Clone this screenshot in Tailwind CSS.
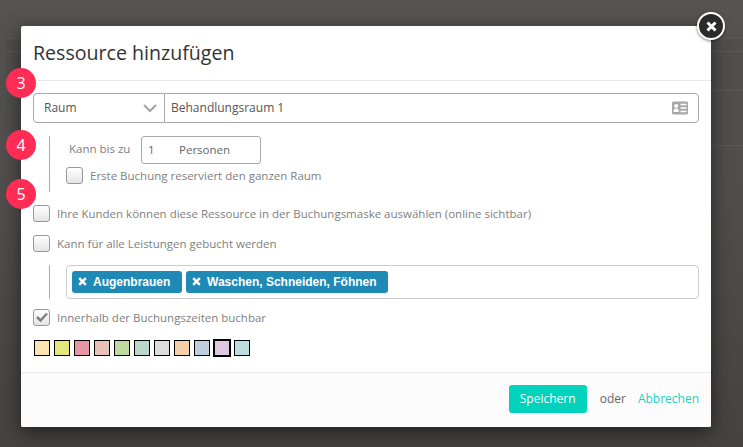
<!DOCTYPE html>
<html lang="de">
<head>
  <meta charset="UTF-8" />
  <title>Ressource hinzufügen</title>
  <script src="https://cdn.jsdelivr.net/npm/@tailwindcss/browser@4"></script>
</head>
<body class="w-[743px] h-[447px] overflow-hidden relative font-['Open_Sans',sans-serif] bg-gradient-to-b from-[#555452] via-[#4e4d4c] to-[#444342]">

  <!-- Seite hinter dem Overlay -->
  <div class="absolute left-[6px] right-0 top-[38px] h-[108px] bg-[#504f4e] border-y border-[#5a5958]">
    <div class="mt-[12px] h-[40px] border-y border-[#5a5958]"></div>
  </div>

  <!-- Modal -->
  <div class="absolute left-[21px] top-[26px] w-[690px] h-[401px] bg-white rounded-[2px] shadow-[0_5px_20px_rgba(0,0,0,0.55)] flex flex-col">
    <div class="h-[55px] shrink-0 border-b border-[#e8e8e8] pl-[12px] pt-[13px]">
      <h2 class="text-[19.6px] leading-[28px] text-[#333]">Ressource hinzufügen</h2>
    </div>

    <div class="flex-1 px-[12px] pt-[12px] text-[11.5px] text-[#808080]">
      <!-- Typ + Name -->
      <div class="flex h-[30px] border border-[#aaa] rounded-[4px] text-[#555] text-[12px]">
        <div class="w-[131px] shrink-0 border-r border-[#aaa] flex items-center justify-between pl-[10px] pr-[7px]">
          <span>Raum</span>
          <svg width="14" height="9" viewBox="0 0 14 9" fill="none" stroke="#a3a3a3" stroke-width="2"><path d="M1 1l6 6 6-6" /></svg>
        </div>
        <div class="flex-1 flex items-center justify-between pl-[6px] pr-[10px]">
          <span>Behandlungsraum 1</span>
          <svg width="16" height="14" viewBox="0 0 16 14"><rect width="16" height="13" y="0.5" rx="1.5" fill="#a8a8a8" /><circle cx="4.2" cy="5" r="2" fill="#fff" /><path d="M1.5 11c0-2.5 1-3.500 2.700-3.500S7 8.500 7 11z" fill="#fff" /><path d="M8.500 3.500h6M8.500 7h6M8.500 10.500h6" stroke="#fff" stroke-width="1.300" /></svg>
        </div>
      </div>

      <!-- Kapazität -->
      <div class="mt-[13px] ml-[16px] h-[56px] border-l border-[#aaa] pl-[16px]">
        <div class="flex h-[28px]">
          <span class="ml-[3px] w-[72px] pt-[5px] leading-[16px]">Kann bis zu</span>
          <div class="w-[120px] border border-[#aaa] rounded-[3px] flex items-center pl-[6px] text-[#666]">
            <span class="w-[31px]">1</span><span>Personen</span>
          </div>
        </div>
        <label class="mt-[3px] flex items-center gap-[7px]">
          <span class="w-[17px] h-[17px] border border-[#999] rounded-[3px] bg-gradient-to-b from-white to-[#e4e4e4]"></span>
          <span>Erste Buchung reserviert den ganzen Raum</span>
        </label>
      </div>

      <label class="mt-[13px] flex items-center gap-[7px]">
        <span class="w-[17px] h-[17px] border border-[#999] rounded-[3px] bg-gradient-to-b from-white to-[#e4e4e4]"></span>
        <span>Ihre Kunden können diese Ressource in der Buchungsmaske auswählen (online sichtbar)</span>
      </label>
      <label class="mt-[13px] flex items-center gap-[7px]">
        <span class="w-[17px] h-[17px] border border-[#999] rounded-[3px] bg-gradient-to-b from-white to-[#e4e4e4]"></span>
        <span>Kann für alle Leistungen gebucht werden</span>
      </label>

      <!-- Leistungen -->
      <div class="mt-[12px] ml-[16px] h-[34px] border-l border-[#aaa] pl-[16px]">
        <div class="h-[34px] border border-[#ccc] rounded-[4px] flex items-center gap-[4px] pl-[5px] font-['Liberation_Sans',sans-serif] text-[12px] font-bold text-white">
          <span class="w-[110px] h-[22px] bg-[#1f8ab5] rounded-[3px] flex items-center pl-[6px] gap-[6px]">
            <svg width="9" height="9" viewBox="0 0 9 9" stroke="#fff" stroke-width="2.400"><path d="M1.200 1.200l6.600 6.600M7.800 1.200l-6.600 6.600" /></svg>Augenbrauen
          </span>
          <span class="w-[202px] h-[22px] bg-[#1f8ab5] rounded-[3px] flex items-center pl-[6px] gap-[6px]">
            <svg width="9" height="9" viewBox="0 0 9 9" stroke="#fff" stroke-width="2.400"><path d="M1.200 1.200l6.600 6.600M7.800 1.200l-6.600 6.600" /></svg>Waschen, Schneiden, Föhnen
          </span>
        </div>
      </div>

      <label class="mt-[10px] flex items-center gap-[7px]">
        <span class="w-[17px] h-[17px] border border-[#999] rounded-[3px] bg-gradient-to-b from-white to-[#e4e4e4] flex items-center justify-center">
          <svg width="12" height="10" viewBox="0 0 12 10" fill="none" stroke="#808080" stroke-width="2.500"><path d="M1 5l3.500 3.500L11 1.500" /></svg>
        </span>
        <span>Innerhalb der Buchungszeiten buchbar</span>
      </label>

      <!-- Farben -->
      <div class="mt-[13px] ml-[1px] flex items-center gap-[4px] h-[18px]">
        <span class="w-[16px] h-[16px] border border-black bg-[#fbe3b2]"></span>
        <span class="w-[16px] h-[16px] border border-black bg-[#e2e87a]"></span>
        <span class="w-[16px] h-[16px] border border-black bg-[#e595a3]"></span>
        <span class="w-[16px] h-[16px] border border-black bg-[#e9c1b9]"></span>
        <span class="w-[16px] h-[16px] border border-black bg-[#bfd9a3]"></span>
        <span class="w-[16px] h-[16px] border border-black bg-[#bad8ca]"></span>
        <span class="w-[16px] h-[16px] border border-black bg-[#dcdcdc]"></span>
        <span class="w-[16px] h-[16px] border border-black bg-[#f5cfa8]"></span>
        <span class="w-[16px] h-[16px] border border-black bg-[#bfcfdf]"></span>
        <span class="w-[18px] h-[18px] -mx-[1px] border-2 border-black bg-[#dfc8e2]"></span>
        <span class="w-[16px] h-[16px] border border-black bg-[#bcdee0]"></span>
      </div>
    </div>

    <!-- Footer -->
    <div class="h-[55px] shrink-0 border-t border-[#e8e8e8] bg-[#fcfcfc] rounded-b-[2px] flex items-center justify-end pr-[12px] pb-[2px] text-[12px]">
      <button class="w-[78px] h-[28px] bg-[#00d2bc] rounded-[3px] text-white text-[12px]">Speichern</button>
      <span class="ml-[13px] text-[#666]">oder</span>
      <a class="ml-[12px] text-[#1bd3c0]">Abbrechen</a>
    </div>
  </div>

  <!-- Schließen -->
  <div class="absolute left-[697px] top-[12px] w-[28px] h-[28px] rounded-full bg-[#2b2b2b] border-2 border-white shadow-[0_1px_3px_rgba(0,0,0,0.5)] flex items-center justify-center">
    <svg width="11" height="11" viewBox="0 0 11 11" stroke="#fff" stroke-width="3"><path d="M1.500 1.500l8 8M9.500 1.500l-8 8" /></svg>
  </div>

  <!-- Nummern -->
  <div class="absolute left-[6px] top-[68px] w-[30px] h-[30px] rounded-full bg-[#ff2d55] text-white text-[16px] flex items-center justify-center">3</div>
  <div class="absolute left-[6px] top-[130px] w-[30px] h-[30px] rounded-full bg-[#ff2d55] text-white text-[16px] flex items-center justify-center">4</div>
  <div class="absolute left-[6px] top-[179px] w-[30px] h-[30px] rounded-full bg-[#ff2d55] text-white text-[16px] flex items-center justify-center">5</div>
</body>
</html>
